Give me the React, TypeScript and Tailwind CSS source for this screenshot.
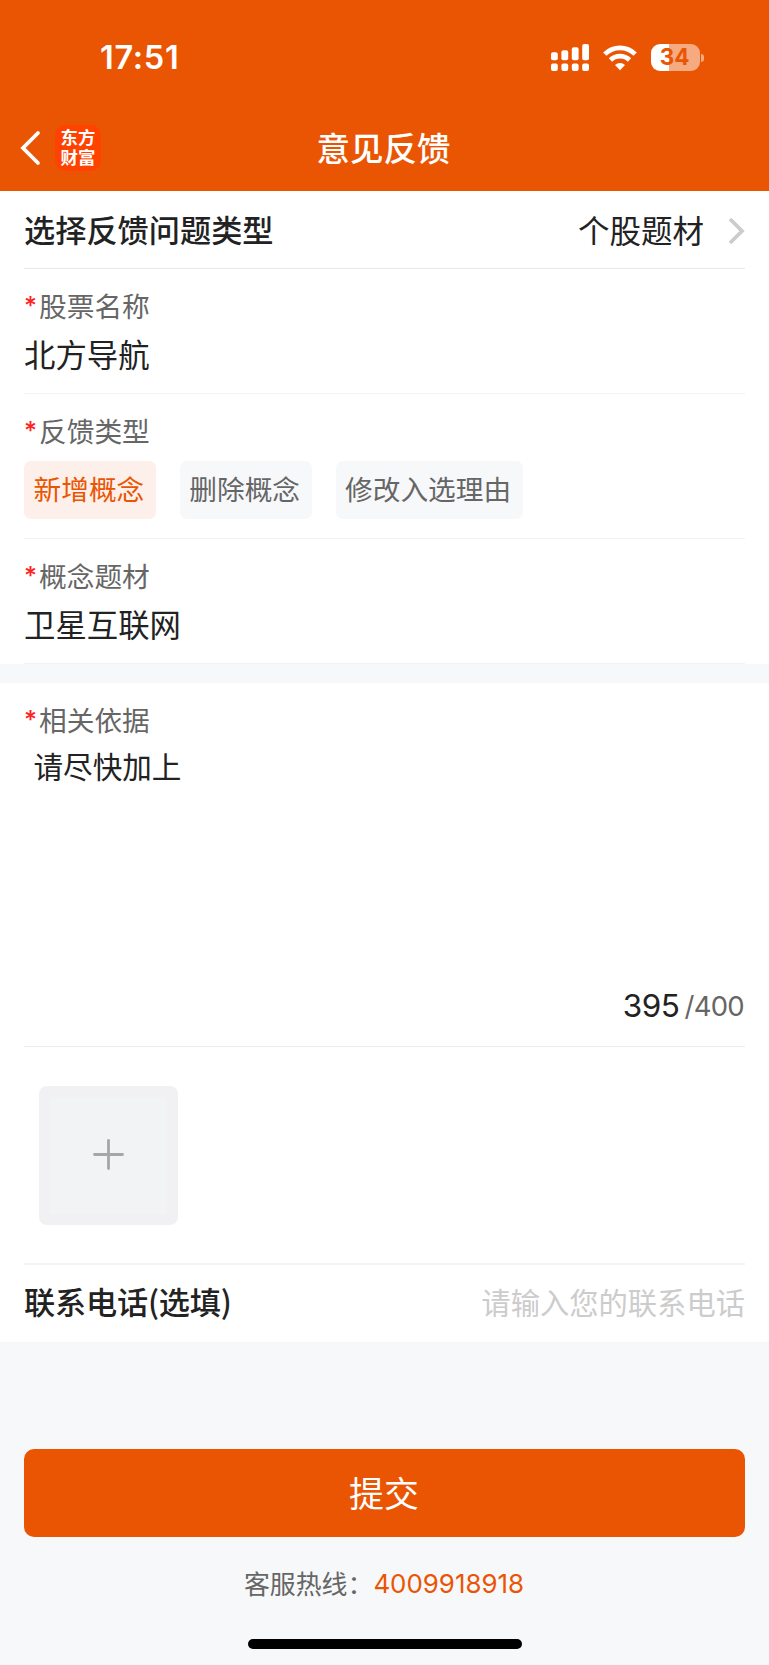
import { useState } from 'react';
import { clsx } from 'clsx';

const FEEDBACK_TYPES = ['新增概念', '删除概念', '修改入选理由'];
const MAX_LENGTH = 400;

function SignalIcon() {
  return (
    <svg width="38" height="28" viewBox="0 0 38 28" fill="#fff">
      <rect x="0" y="8.3" width="6.8" height="8" rx="2" />
      <rect x="10.4" y="6.3" width="6.8" height="10" rx="2" />
      <rect x="20.8" y="3.3" width="6.8" height="13" rx="2" />
      <rect x="31.2" y="0" width="6.8" height="16.3" rx="2" />
      <rect x="0" y="19.4" width="6.8" height="7.6" rx="2" />
      <rect x="10.4" y="19.4" width="6.8" height="7.6" rx="2" />
      <rect x="20.8" y="19.4" width="6.8" height="7.6" rx="2" />
      <rect x="31.2" y="19.4" width="6.8" height="7.6" rx="2" />
    </svg>
  );
}

function WifiIcon() {
  return (
    <svg width="34" height="26" viewBox="0 0 34 26" fill="none" stroke="#fff" strokeWidth="4.8">
      <path d="M1.8 9.1a21.6 21.6 0 0 1 30.4 0" />
      <path d="M7.5 15a13.6 13.6 0 0 1 19 0" />
      <path d="M17 25.2l-5-5.1a7.2 7.2 0 0 1 10 0z" fill="#fff" stroke="none" />
    </svg>
  );
}

function BatteryIcon() {
  return (
    <div className="flex items-center gap-[1px]">
      <div className="flex h-[27px] w-[49px] items-center justify-center rounded-[9px] bg-linear-to-r from-white from-36% to-[#f5aa80] to-36% pr-0.5 font-['Inter',sans-serif] text-[22.5px] leading-none font-bold text-[#ea5504]">
        34
      </div>
      <div className="h-2 w-[3px] rounded-r-full bg-[#f5aa80]" />
    </div>
  );
}

function FieldLabel({ children }: { children: React.ReactNode }) {
  return (
    <div className="flex h-7 items-center text-[27.7px] leading-7 text-[#666]">
      <span className="w-[15px] pt-0.5 font-['Inter',sans-serif] text-[25px] font-medium text-[#f22]">*</span>
      {children}
    </div>
  );
}

function TextField({ label, value }: { label: string; value: string }) {
  return (
    <div className="mx-6 h-[125px] border-b border-[#f2f2f2] pt-[22px]">
      <FieldLabel>{label}</FieldLabel>
      <div className="mt-[15px] text-[31.4px] leading-10">{value}</div>
    </div>
  );
}

export default function App() {
  const [type, setType] = useState(FEEDBACK_TYPES[0]);
  const content = '请尽快加上';

  return (
    <div className="flex h-[1665px] w-[769px] flex-col overflow-hidden bg-[#f7f8fa] font-['Noto_Sans_CJK_SC',sans-serif] text-[#222]">
      {/* Header */}
      <header className="h-[191px] bg-[#ea5504] text-white">
        <div className="flex h-[115px] items-center justify-between pr-[65px] pl-[100px]">
          <span className="pt-0.5 font-['Inter',sans-serif] text-[32.5px] leading-none font-semibold tracking-[0.7px]">
            17:51
          </span>
          <div className="flex items-center gap-[14px]">
            <SignalIcon />
            <WifiIcon />
            <BatteryIcon />
          </div>
        </div>
        <div className="grid h-[65px] grid-cols-[1fr_auto_1fr] items-center px-5">
          <div className="flex items-center gap-[14px]">
            <svg width="21" height="36" viewBox="0 0 21 36" fill="none" stroke="#fff" strokeWidth="3.8" strokeLinecap="round">
              <path d="M18 3L3 18l15 15" />
            </svg>
            <div className="flex h-[46px] w-[46px] items-center justify-center rounded-[10px] bg-[#ff4200] pb-0.5">
              <span className="w-[35px] text-[17.4px] leading-[19.5px] font-bold break-all">东方财富</span>
            </div>
          </div>
          <h1 className="pr-0.5 pb-px text-[33.5px] leading-10 font-medium">意见反馈</h1>
        </div>
      </header>

      <section className="bg-white">
        <div className="mx-6 flex h-[78px] items-center justify-between border-b border-[#e8e8e8] text-[31.2px]">
          <span className="font-medium">选择反馈问题类型</span>
          <div className="flex items-center gap-6">
            <span className="text-[31.5px]">个股题材</span>
            <svg width="17" height="30" viewBox="0 0 17 30" fill="none" stroke="#ccc" strokeWidth="3.8">
              <path d="M2 4l12 12L2 28" />
            </svg>
          </div>
        </div>

        <TextField label="股票名称" value="北方导航" />

        <div className="mx-6 h-[145px] border-b border-[#f2f2f2] pt-[22px]">
          <FieldLabel>反馈类型</FieldLabel>
          <div className="mt-[17px] flex gap-6">
            {FEEDBACK_TYPES.map((t) => (
              <button
                key={t}
                onClick={() => setType(t)}
                className={clsx(
                  'h-[58px] rounded-[7px] pr-[11.5px] pb-0.5 pl-[9.5px] text-[27.7px] leading-none',
                  type === t ? 'bg-[#fdf0ea] text-[#ea5504]' : 'bg-[#f7f8fa] text-[#666]'
                )}
              >
                {t}
              </button>
            ))}
          </div>
        </div>

        <TextField label="概念题材" value="卫星互联网" />
      </section>

      <section className="mt-[19px] bg-white">
        {/* Description */}
        <div className="mx-6 flex h-[364px] flex-col border-b border-[#ececec] pt-[22px]">
          <FieldLabel>相关依据</FieldLabel>
          <div className="mt-[13px] pl-[9.5px] text-[29.6px] leading-10">{content}</div>
          <div className="mt-auto mb-5 flex items-center justify-end gap-[5px] pr-px font-['Inter',sans-serif] leading-10">
            <span className="text-[31.5px] tracking-[-0.5px]">{MAX_LENGTH - content.length}</span>
            <span className="text-[27.5px] tracking-[-0.7px] text-[#666]">/{MAX_LENGTH}</span>
          </div>
        </div>

        {/* Image upload */}
        <div className="mx-6 h-[218px] border-b-2 border-[#f3f4f6] pt-[39px] pl-[15px]">
          <button className="flex h-[139px] w-[139px] items-center justify-center rounded-[8px] bg-[#f1f1f4]">
            <span className="flex h-[117px] w-[117px] items-center justify-center bg-[#f1f3f5] pb-0.5">
              <svg width="31" height="31" viewBox="0 0 31 31" stroke="#a6a6a6" strokeWidth="2.8" strokeLinecap="round">
                <path d="M15.5 1.5v28M1.5 15.5h28" />
              </svg>
            </span>
          </button>
        </div>

        <div className="mx-6 flex h-[77px] items-center justify-between pb-1">
          <span className="text-[31.2px] font-medium tracking-[-0.2px]">联系电话(选填)</span>
          <span className="text-[29.3px] text-[#ccc]">请输入您的联系电话</span>
        </div>
      </section>

      {/* Submit */}
      <div className="mt-[107px] px-6">
        <button className="h-[88px] w-full rounded-[10px] bg-[#ea5504] pr-px pb-[2px] text-[34.9px] leading-none text-white">
          提交
        </button>
      </div>
      <div className="mt-[26px] flex h-10 items-center justify-center pr-px text-[25.9px] text-[#666]">
        客服热线：
        <span className="pt-0.5 font-['Inter',sans-serif] text-[#ea5504]">4009918918</span>
      </div>
      <div className="mx-auto mt-auto mb-4 h-[10px] w-[274px] rounded-full bg-black" />
    </div>
  );
}
